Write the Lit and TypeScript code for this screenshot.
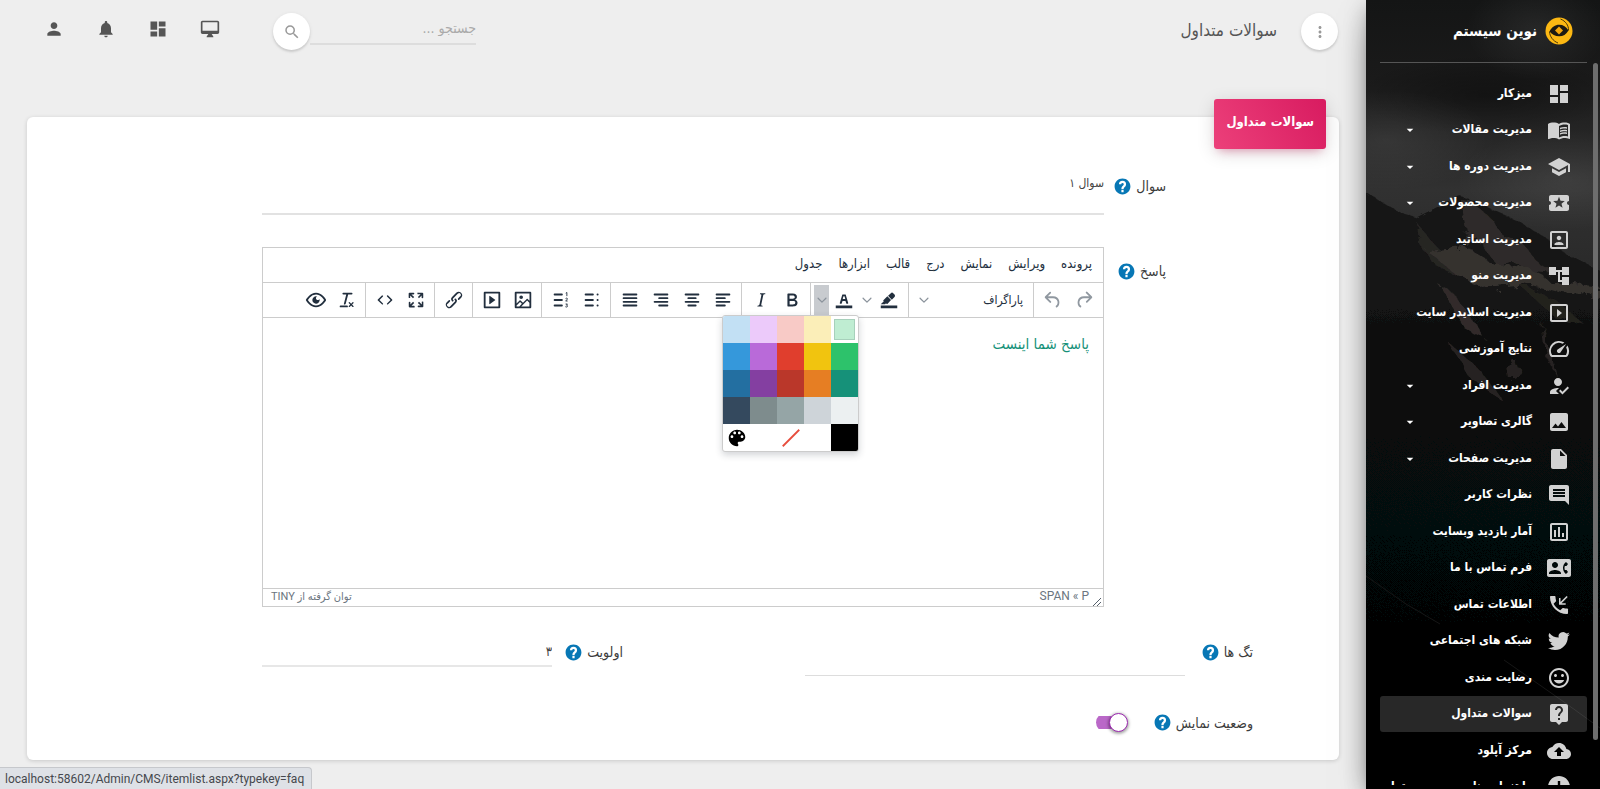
import { LitElement, html, css, svg, nothing } from "lit";
import { customElement, property, state } from "lit/decorators.js";
import { classMap } from "lit/directives/class-map.js";
import { styleMap } from "lit/directives/style-map.js";

const ICONS: Record<string, string> = {
  dashboard: "M3 13h8V3H3v10zm0 8h8v-6H3v6zm10 0h8V11h-8v10zm0-18v6h8V3h-8z",
  book: "M21 5c-1.11-.35-2.33-.5-3.5-.5-1.95 0-4.05.4-5.5 1.5-1.45-1.1-3.55-1.5-5.5-1.5S2.45 4.9 1 6v14.65c0 .25.25.5.5.5.1 0 .15-.05.25-.05C3.1 20.45 5.05 20 6.5 20c1.95 0 4.05.4 5.5 1.5 1.35-.85 3.8-1.5 5.5-1.5 1.65 0 3.35.3 4.75 1.05.1.05.15.05.25.05.25 0 .5-.25.5-.5V6c-.6-.45-1.25-.75-2-1zm0 13.5c-1.1-.35-2.3-.5-3.5-.5-1.7 0-4.15.65-5.5 1.5V8c1.35-.85 3.8-1.5 5.5-1.5 1.2 0 2.4.15 3.5.5v11.5zM17.5 10.5c.88 0 1.73.09 2.5.26V9.24c-.79-.15-1.64-.24-2.5-.24-1.7 0-3.24.29-4.5.83v1.66c1.13-.64 2.7-.99 4.5-.99zM13 12.49v1.66c1.13-.64 2.7-.99 4.5-.99.88 0 1.73.09 2.5.26V11.9c-.79-.15-1.64-.24-2.5-.24-1.7 0-3.24.3-4.5.83zM17.5 14.33c-1.7 0-3.24.29-4.5.83v1.66c1.13-.64 2.7-.99 4.5-.99.88 0 1.73.09 2.5.26v-1.52c-.79-.16-1.64-.24-2.5-.24z",
  school: "M5 13.18v4L12 21l7-3.82v-4L12 17l-7-3.82zM12 3L1 9l11 6 9-4.91V17h2V9L12 3z",
  ticket: "M20 12c0-1.1.9-2 2-2V6c0-1.1-.9-2-2-2H4c-1.1 0-1.99.9-1.99 2v4c1.1 0 1.99.9 1.99 2s-.89 2-2 2v4c0 1.1.9 2 2 2h16c1.1 0 2-.9 2-2v-4c-1.1 0-2-.9-2-2zm-4.42 4.8L12 14.5l-3.58 2.3 1.08-4.12-3.29-2.69 4.24-.25L12 5.8l1.54 3.95 4.24.25-3.29 2.69 1.09 4.11z",
  portrait: "M12 12.25c1.24 0 2.25-1.01 2.25-2.25S13.24 7.75 12 7.75 9.75 8.76 9.75 10s1.01 2.25 2.25 2.25zm4.5 4c0-1.5-3-2.25-4.5-2.25s-4.5.75-4.5 2.25V17h9v-.75zM19 3H5c-1.1 0-2 .9-2 2v14c0 1.1.9 2 2 2h14c1.1 0 2-.9 2-2V5c0-1.1-.9-2-2-2zm0 16H5V5h14v14z",
  tree: "M22 11V3h-7v3H9V3H2v8h7V8h2v10h4v3h7v-8h-7v3h-2V8h2v3z",
  slideshow: "M10 8v8l5-4-5-4zm9-5H5c-1.1 0-2 .9-2 2v14c0 1.1.9 2 2 2h14c1.1 0 2-.9 2-2V5c0-1.1-.9-2-2-2zm0 16H5V5h14v14z",
  speed: "M20.38 8.57l-1.23 1.85a8 8 0 01-.22 7.58H5.07A8 8 0 0115.58 6.85l1.85-1.23A10 10 0 003.35 19a2 2 0 001.72 1h13.85a2 2 0 001.74-1 10 10 0 00-.27-10.44zm-9.79 6.84a2 2 0 002.83 0l5.66-8.49-8.49 5.66a2 2 0 000 2.83z",
  people: "M9 17l3-2.94c-.39-.04-.68-.06-1-.06-2.67 0-8 1.34-8 4v2h9l-3-3zm2-5c2.21 0 4-1.79 4-4s-1.79-4-4-4-4 1.79-4 4 1.79 4 4 4M15.47 20.5L12 17l1.4-1.41 2.07 2.08 5.13-5.17 1.4 1.41z",
  photo: "M21 19V5c0-1.1-.9-2-2-2H5c-1.1 0-2 .9-2 2v14c0 1.1.9 2 2 2h14c1.1 0 2-.9 2-2zM8.5 13.5l2.5 3.01L14.5 12l4.5 6H5l3.5-4.5z",
  file: "M6 2c-1.1 0-1.99.9-1.99 2L4 20c0 1.1.89 2 1.99 2H18c1.1 0 2-.9 2-2V8l-6-6H6zm7 7V3.5L18.5 9H13z",
  comment: "M21.99 4c0-1.1-.89-2-1.99-2H4c-1.1 0-2 .9-2 2v12c0 1.1.9 2 2 2h14l4 4-.01-18zM18 14H6v-2h12v2zm0-3H6V9h12v2zm0-3H6V6h12v2z",
  chart: "M9 17H7v-7h2v7zm4 0h-2V7h2v10zm4 0h-2v-4h2v4zM19 3H5c-1.1 0-2 .9-2 2v14c0 1.1.9 2 2 2h14c1.1 0 2-.9 2-2V5c0-1.1-.9-2-2-2zm0 16H5V5h14v14z",
  contact: "M22 3H2C.9 3 0 3.9 0 5v14c0 1.1.9 2 2 2h20c1.1 0 1.99-.9 1.99-2L24 5c0-1.1-.9-2-2-2zM8 6c1.66 0 3 1.34 3 3s-1.34 3-3 3-3-1.34-3-3 1.34-3 3-3zm6 12H2v-1c0-2 4-3.1 6-3.1s6 1.1 6 3.1v1zm3.85-4h1.64L21 16l-1.99 1.99c-1.31-.98-2.28-2.38-2.73-3.99-.18-.64-.28-1.31-.28-2s.1-1.36.28-2c.45-1.62 1.42-3.01 2.73-3.99L21 8l-1.51 2h-1.64c-.22.63-.35 1.3-.35 2s.13 1.37.35 2z",
  phone: "M20 15.5c-1.25 0-2.45-.2-3.57-.57-.35-.11-.74-.03-1.02.24l-2.2 2.2c-2.83-1.44-5.15-3.75-6.59-6.58l2.2-2.21c.28-.27.36-.66.25-1.01C8.7 6.45 8.5 5.25 8.5 4c0-.55-.45-1-1-1H4c-.55 0-1 .45-1 1 0 9.39 7.61 17 17 17 .55 0 1-.45 1-1v-3.5c0-.55-.45-1-1-1zM19.6 3l-6.1 6.1V5H12v6.7h6.7v-1.5h-4.1L20.7 4.1z",
  twitter: "M22.9 5.2a9.2 9.2 0 01-2.6.7 4.5 4.5 0 002-2.5 9 9 0 01-2.9 1.1 4.5 4.5 0 00-7.7 4.1A12.8 12.8 0 012.4 3.9a4.5 4.5 0 001.4 6 4.5 4.5 0 01-2-.5v.1a4.5 4.5 0 003.6 4.4 4.6 4.6 0 01-2 .1 4.5 4.5 0 004.2 3.1A9 9 0 011 19a12.8 12.8 0 006.9 2c8.3 0 12.9-6.9 12.9-12.8v-.6a9.2 9.2 0 002.1-2.4z",
  mood: "M11.99 2C6.47 2 2 6.48 2 12s4.47 10 9.99 10C17.52 22 22 17.52 22 12S17.52 2 11.99 2zM12 20c-4.42 0-8-3.58-8-8s3.58-8 8-8 8 3.58 8 8-3.58 8-8 8zm3.5-9c.83 0 1.5-.67 1.5-1.5S16.33 8 15.5 8 14 8.67 14 9.5s.67 1.5 1.5 1.5zm-7 0c.83 0 1.5-.67 1.5-1.5S9.33 8 8.5 8 7 8.67 7 9.5 7.67 11 8.5 11zm3.5 6.5c2.33 0 4.31-1.46 5.11-3.5H6.89c.8 2.04 2.78 3.5 5.11 3.5z",
  faq: "M19 2H5c-1.11 0-2 .9-2 2v14c0 1.1.89 2 2 2h4l3 3 3-3h4c1.1 0 2-.9 2-2V4c0-1.1-.9-2-2-2zm-6 16h-2v-2h2v2zm2.07-7.75l-.9.92C13.45 11.9 13 12.5 13 14h-2v-.5c0-1.1.45-2.1 1.17-2.83l1.24-1.26c.37-.36.59-.86.59-1.41 0-1.1-.9-2-2-2s-2 .9-2 2H8c0-2.21 1.79-4 4-4s4 1.79 4 4c0 .88-.36 1.68-.93 2.25z",
  upload: "M19.35 10.04C18.67 6.59 15.64 4 12 4 9.11 4 6.6 5.64 5.35 8.04 2.34 8.36 0 10.91 0 14c0 3.31 2.69 6 6 6h13c2.76 0 5-2.24 5-5 0-2.64-2.05-4.78-4.65-4.96zM14 13v4h-4v-4H7l5-5 5 5h-3z",
  guide: "M12 1C5.900 1 1 5.900 1 12s4.900 11 11 11 11-4.900 11-11S18.100 1 12 1zm1.200 17h-2.400v-2.400h2.400V18zm0-4.400h-2.400V6h2.400v7.600z",
  help: "M12 2C6.48 2 2 6.48 2 12s4.48 10 10 10 10-4.48 10-10S17.52 2 12 2zm1.4 17.2h-2.800v-2.700h2.800v2.700zm2.400-7.500l-1 1c-.8.8-1.400 1.300-1.400 2.700h-2.800v-.7c0-1.100.5-2.100 1.200-2.900l1.300-1.300c.4-.4.5-.8.5-1.300a1.600 1.600 0 00-3.200 0H7.500a4.500 4.500 0 019 0c0 1-.3 1.900-.7 2.500z",
  person: "M12 12c2.21 0 4-1.79 4-4s-1.79-4-4-4-4 1.79-4 4 1.79 4 4 4zm0 2c-2.67 0-8 1.34-8 4v2h16v-2c0-2.66-5.33-4-8-4z",
  bell: "M12 22c1.1 0 2-.9 2-2h-4c0 1.1.89 2 2 2zm6-6v-5c0-3.07-1.64-5.64-4.5-6.32V4c0-.83-.67-1.5-1.5-1.5s-1.5.67-1.5 1.5v.68C7.63 5.36 6 7.92 6 11v5l-2 2v1h16v-1l-2-2z",
  desktop: "M21 2H3c-1.1 0-2 .9-2 2v12c0 1.1.9 2 2 2h7l-2 3v1h8v-1l-2-3h7c1.1 0 2-.9 2-2V4c0-1.1-.9-2-2-2zm0 12H3V4h18v10z",
  search: "M15.5 14h-.79l-.28-.27A6.471 6.471 0 0016 9.5 6.5 6.5 0 109.5 16c1.61 0 3.09-.59 4.23-1.57l.27.28v.79l5 4.99L20.49 19l-4.99-5zm-6 0C7.01 14 5 11.99 5 9.5S7.01 5 9.5 5 14 7.01 14 9.5 11.99 14 9.5 14z",
  more: "M12 8c1.1 0 2-.9 2-2s-.9-2-2-2-2 .9-2 2 .9 2 2 2zm0 2c-1.1 0-2 .9-2 2s.9 2 2 2 2-.9 2-2-.9-2-2-2zm0 6c-1.1 0-2 .9-2 2s.9 2 2 2 2-.9 2-2-.9-2-2-2z",
  caret: "M4 9l8 8 8-8z",
  forward: "M17.6 10H12c-2.8 0-4.4 1.4-4.9 3.5-.4 2 .3 4 1.4 4.6a1 1 0 11-1 1.8c-2-1.2-2.9-4.1-2.3-6.8.6-3 3-5.1 6.8-5.1h5.6l-3.3-3.3a1 1 0 111.4-1.4l5 5a1 1 0 010 1.4l-5 5a1 1 0 01-1.4-1.4l3.3-3.3z",
  back: "M6.4 8H12c3.7 0 6.2 2 6.8 5.1.6 2.7-.4 5.6-2.3 6.8a1 1 0 01-1-1.8c1.1-.6 1.8-2.7 1.4-4.6-.5-2.1-2.1-3.5-4.9-3.5H6.4l3.3 3.3a1 1 0 11-1.4 1.4l-5-5a1 1 0 010-1.4l5-5a1 1 0 011.4 1.4L6.4 8z",
  chevron: "M19 7.6c.5-.5 1.3-.5 1.7 0 .5.5.5 1.2 0 1.7l-7.9 7.6c-.5.5-1.2.5-1.7 0L3.3 9.3a1.2 1.2 0 010-1.7c.5-.5 1.2-.5 1.7 0l7 6.8z",
  highlight: "M3 18h18v3H3zM7.7 16.7H3l3.3-3.3-.7-.8L10.2 8l4 4.1-4 4.2c-.2.2-.6.2-.8 0l-.6-.7-1.1 1.1zm5-7.5L11 7.4l3-2.9a2 2 0 012.6 0L18 6c.7.7.7 2 0 2.7l-2.9 2.9z",
  forecolor: "M3 18h18v3H3zM8.7 16h-.8a.5.5 0 01-.5-.6l2.7-9c.1-.3.3-.4.5-.4h2.8c.2 0 .4.1.5.4l2.7 9a.5.5 0 01-.5.6h-1.3a.5.5 0 01-.4-.4l-.7-2.2c0-.3-.3-.4-.5-.4h-2.4c-.2 0-.4.1-.5.4l-.7 2.2c0 .3-.2.4-.4.4zm2.6-7.6l-.6 2a.5.5 0 00.5.6h1.6a.5.5 0 00.5-.6l-.6-2c0-.3-.3-.4-.5-.4h-.4c-.2 0-.4.1-.5.4z",
  bold: "M7.8 19c-.3 0-.5 0-.6-.2l-.2-.5V5.7c0-.2 0-.4.2-.5l.6-.2h5c1.5 0 2.7.3 3.5 1 .7.6 1.1 1.4 1.1 2.5a3 3 0 01-.6 1.9c-.4.6-1 1-1.6 1.2.4.1.9.3 1.3.6s.8.7 1 1.2c.4.4.5 1 .5 1.6 0 1.3-.4 2.3-1.3 3-.8.7-2.1 1-3.8 1H7.8zm5-8.3c.6 0 1.2-.1 1.6-.5.4-.3.6-.7.6-1.3 0-1.1-.8-1.7-2.3-1.7H9.3v3.5h3.4zm.5 6c.7 0 1.3-.1 1.7-.4.4-.4.6-.9.6-1.5s-.2-1-.7-1.4c-.4-.3-1-.4-2-.4H9.4v3.8h4z",
  italic: "M16.7 4.7l-.1.9h-.3c-.6 0-1 0-1.4.3-.3.3-.4.6-.5 1.1l-2.1 9.8v.6c0 .5.4.8 1.4.8h.2l-.2.8H8l.2-.8h.2c1.1 0 1.8-.5 2-1.5l2-9.8.1-.5c0-.6-.4-.8-1.4-.8h-.3l.2-.9h5.8z",
  media: "M4 3h16c.6 0 1 .4 1 1v16c0 .6-.4 1-1 1H4a1 1 0 01-1-1V4c0-.6.4-1 1-1zm1 2v14h14V5H5zm4.800 2.600l5.600 4a.5.5 0 010 .8l-5.600 4A.5.5 0 019 16V8a.5.5 0 01.8-.4z",
  image: "M5 15.7l3.3-3.2c.3-.3.7-.3 1 0L12 15l4.1-4c.3-.4.8-.4 1 0l2 1.9V5H5v10.7zM5 18V19h3l2.8-2.9-2-2L5 17.9zm14-3l-2.5-2.4-6.4 6.5H19v-4zM4 3h16c.6 0 1 .4 1 1v16c0 .6-.4 1-1 1H4a1 1 0 01-1-1V4c0-.6.4-1 1-1zm6 8a2 2 0 100-4 2 2 0 000 4z",
  link: "M6.2 12.3a1 1 0 011.4 1.4l-2.1 2a2 2 0 102.7 2.8l4.8-4.8a1 1 0 000-1.4 1 1 0 111.4-1.3 2.9 2.9 0 010 4L9.6 20a3.9 3.9 0 01-5.5-5.5l2-2zm11.6-.6a1 1 0 01-1.4-1.4l2-2a2 2 0 10-2.6-2.8L11 10.3a1 1 0 000 1.4A1 1 0 119.6 13a2.9 2.9 0 010-4L14.4 4a3.9 3.9 0 015.5 5.5l-2 2z",
  code: "M9.8 15.7c.3.3.3.8 0 1-.3.4-.9.4-1.2 0l-4.4-4.1a.8.8 0 010-1.2l4.4-4.2c.3-.3.9-.3 1.2 0 .3.3.3.8 0 1.1L6 12l3.8 3.7zM14.2 15.7c-.3.3-.3.8 0 1 .4.4.9.4 1.2 0l4.4-4.1c.3-.3.3-.9 0-1.2l-4.4-4.2a.8.8 0 00-1.2 0c-.3.3-.3.8 0 1.1L18 12l-3.8 3.7z",
  fullscreen: "M15.3 10l-1.2-1.3 2.9-3h-2.3a.9.9 0 110-1.7H19c.5 0 .9.4.9.9v4.4a.9.9 0 11-1.8 0V7l-2.9 3zm0 4l3 3v-2.3a.9.9 0 111.7 0V19c0 .5-.4.9-.9.9h-4.4a.9.9 0 110-1.8H17l-3-2.9 1.3-1.2zM10 15.4l-2.9 3h2.3a.9.9 0 110 1.7H5a.9.9 0 01-.9-.9v-4.4a.9.9 0 111.8 0V17l2.9-3 1.2 1.3zM8.7 10L5.7 7v2.3a.9.9 0 01-1.7 0V5c0-.5.4-.9.9-.9h4.4a.9.9 0 010 1.8H7l3 2.9-1.3 1.2z",
  clear: "M13.2 6a1 1 0 010 .2l-2.6 10a1 1 0 01-1 .8h-.2a.8.8 0 01-.8-1l2.6-10H8a1 1 0 110-2h9a1 1 0 010 2h-3.8zM5 18h7a1 1 0 010 2H5a1 1 0 010-2zm13 1.5L16.5 18 15 19.5a.7.7 0 01-1-1l1.5-1.5-1.5-1.5a.7.7 0 011-1l1.5 1.5 1.5-1.5a.7.7 0 011 1L17.5 17l1.5 1.5a.7.7 0 01-1 1z",
  preview: "M3.5 12.5c.5.8 1.1 1.6 1.8 2.3 2 2 4.2 3.2 6.7 3.2s4.7-1.2 6.7-3.2a16.2 16.2 0 002.1-2.8 15.7 15.7 0 00-2.1-2.8c-2-2-4.2-3.2-6.7-3.2a9.3 9.3 0 00-6.7 3.2A16.2 16.2 0 003.2 12c0 .2.2.3.3.5zm-2.4-1l.7-1.2L4 7.8C6.2 5.4 8.9 4 12 4c3 0 5.8 1.4 8.1 3.8a18.2 18.2 0 012.8 3.7v1l-.7 1.2-2.1 2.5c-2.3 2.4-5 3.8-8.1 3.8-3 0-5.8-1.4-8.1-3.8a18.2 18.2 0 01-2.8-3.7 1 1 0 010-1zm12-3.3a2 2 0 102.7 2.6 4 4 0 11-2.6-2.6z",
  palette: "M12 3c-4.97 0-9 4.03-9 9s4.03 9 9 9c.83 0 1.5-.67 1.5-1.5 0-.39-.15-.74-.39-1.01-.23-.26-.38-.61-.38-.99 0-.83.67-1.5 1.5-1.5H16c2.76 0 5-2.24 5-5 0-4.42-4.03-8-9-8zm-5.5 9c-.83 0-1.5-.67-1.5-1.5S5.67 9 6.5 9 8 9.67 8 10.5 7.33 12 6.5 12zm3-4C8.67 8 8 7.33 8 6.5S8.67 5 9.5 5s1.5.67 1.5 1.5S10.33 8 9.5 8zm5 0c-.83 0-1.5-.67-1.5-1.5S13.67 5 14.5 5s1.5.67 1.5 1.5S15.33 8 14.5 8zm3 4c-.83 0-1.5-.67-1.5-1.5S16.67 9 17.5 9s1.5.67 1.5 1.5-.67 1.5-1.5 1.5z",
};

/* Icons built from straight strokes: alignment and lists. */
const STROKES: Record<string, { d: string; thin?: string }> = {
  alignLeft: { d: "M5 6h14M5 10h9M5 14h14M5 18h9" },
  alignCenter: { d: "M5 6h14M8 10h8M5 14h14M8 18h8" },
  alignRight: { d: "M5 6h14M10 10h9M5 14h14M10 18h9" },
  alignJustify: { d: "M5 6h14M5 10h14M5 14h14M5 18h14" },
  bullets: { d: "M5 6h8M5 12h8M5 18h8M18 6h.2M18 12h.2M18 18h.2" },
  numbers: {
    d: "M5 6h8M5 12h8M5 18h8",
    thin: "M17.2 4.6l1.2-.8v4M17 10.6c.4-.9 2.2-.8 2 .3-.1.6-1.2 1.3-2 2.2h2.2M17 16.4h2l-1 1.2c1.600.1 1.400 2.200-.2 2.100-.4 0-.8-.2-1-.4",
  },
};

@customElement("ui-icon")
export class UiIcon extends LitElement {
  static styles = css`
    :host { display: inline-flex; flex: none; width: 22px; height: 22px; }
    svg { display: block; width: 100%; height: 100%; fill: currentColor; }
    .stroke { fill: none; stroke: currentColor; stroke-width: 2; stroke-linecap: round; }
    .thin { fill: none; stroke: currentColor; stroke-width: 1; }
  `;
  @property() name = "";

  render() {
    const s = STROKES[this.name];
    return html`<svg viewBox="0 0 24 24" aria-hidden="true">
      ${s
        ? svg`<path class="stroke" d=${s.d}></path>${s.thin ? svg`<path class="thin" d=${s.thin}></path>` : nothing}`
        : svg`<path fill-rule="evenodd" d=${ICONS[this.name] ?? ""}></path>`}
    </svg>`;
  }
}

interface MenuEntry { icon: string; label: string; sub?: boolean; active?: boolean; }

const MENU: MenuEntry[] = [
  { icon: "dashboard", label: "میزکار" },
  { icon: "book", label: "مدیریت مقالات", sub: true },
  { icon: "school", label: "مدیریت دوره ها", sub: true },
  { icon: "ticket", label: "مدیریت محصولات", sub: true },
  { icon: "portrait", label: "مدیریت اساتید" },
  { icon: "tree", label: "مدیریت منو" },
  { icon: "slideshow", label: "مدیریت اسلایدر سایت" },
  { icon: "speed", label: "نتایج آموزشی" },
  { icon: "people", label: "مدیریت افراد", sub: true },
  { icon: "photo", label: "گالری تصاویر", sub: true },
  { icon: "file", label: "مدیریت صفحات", sub: true },
  { icon: "comment", label: "نظرات کاربر" },
  { icon: "chart", label: "آمار بازدید وبسایت" },
  { icon: "contact", label: "فرم تماس با ما" },
  { icon: "phone", label: "اطلاعات تماس" },
  { icon: "twitter", label: "شبکه های اجتماعی" },
  { icon: "mood", label: "رضایت مندی" },
  { icon: "faq", label: "سوالات متداول", active: true },
  { icon: "upload", label: "مرکز آپلود" },
  { icon: "guide", label: "راهنمای پنل مدیریت محتوا" },
];

@customElement("side-bar")
export class SideBar extends LitElement {
  static styles = css`
    :host {
      position: relative; z-index: 2; display: flex; flex-direction: column; flex: none;
      box-sizing: border-box; width: 234px; height: 100vh; padding-bottom: 4px;
      background: #050606; color: #fff;
      box-shadow: 0 14px 34px -11px rgba(0,0,0,.56), 0 4px 22px 0 rgba(0,0,0,.2), 0 7px 9px -4px rgba(0,0,0,.2);
    }
    .scene { position: absolute; inset: 0; width: 100%; height: 100%; }
    .brand {
      position: relative; display: flex; align-items: center; gap: 8px; height: 62px;
      margin: 0 13px 0 14px; padding-right: 14px; border-bottom: 1px solid #555;
      font-size: 15px; font-weight: 700; color: #fff; text-decoration: none; box-sizing: content-box;
    }
    .logo { width: 28px; height: 28px; }
    nav { position: relative; flex: 1; min-height: 0; overflow: hidden; padding: 13px 13px 0 14px; }
    ul { list-style: none; margin: 0; padding: 0; }
    li:nth-child(even) { margin-bottom: 1px; }
    a.entry {
      display: flex; align-items: center; height: 36px; padding: 0 16px 0 25px; border-radius: 3px;
      font-size: 12px; font-weight: 700; color: #fff; text-decoration: none; white-space: nowrap;
    }
    a.entry.active { background: rgba(200,200,200,.2); }
    .entry ui-icon { width: 24px; height: 24px; margin-left: 15px; color: #d2d2d2; }
    .entry span { flex: 1; padding-bottom: 2px; }
    .entry ui-icon.caret { width: 10px; height: 10px; margin: 0; color: #fff; }
    .thumb {
      position: absolute; top: 0; right: 2px; width: 5px; height: 677px; border-radius: 3px; background: #6e6e6e;
    }
  `;

  render() {
    return html`
      <svg class="scene" viewBox="0 0 234 789" preserveAspectRatio="xMidYMin slice" aria-hidden="true">
        <defs>
          <linearGradient id="sky" x1="0" y1="0" x2="0" y2="1">
            <stop offset="0" stop-color="#141515"></stop>
            <stop offset=".1" stop-color="#1a1a1a"></stop>
            <stop offset=".24" stop-color="#313131"></stop>
            <stop offset=".34" stop-color="#2a2a2a"></stop>
            <stop offset="1" stop-color="#050606"></stop>
          </linearGradient>
          <linearGradient id="rock" x1="0" y1="0" x2="0" y2="1">
            <stop offset="0" stop-color="#1a1a1a"></stop>
            <stop offset=".2" stop-color="#121212"></stop>
            <stop offset=".4" stop-color="#070808"></stop>
            <stop offset="1" stop-color="#030404"></stop>
          </linearGradient>
          <radialGradient id="haze">
            <stop offset="0" stop-color="#fff" stop-opacity=".07"></stop>
            <stop offset="1" stop-color="#fff" stop-opacity="0"></stop>
          </radialGradient>
          <radialGradient id="dusk">
            <stop offset="0" stop-color="#000" stop-opacity=".35"></stop>
            <stop offset="1" stop-color="#000" stop-opacity="0"></stop>
          </radialGradient>
          <filter id="ragged" filterUnits="userSpaceOnUse" x="-20" y="170" width="274" height="260">
            <feTurbulence type="fractalNoise" baseFrequency=".09" numOctaves="4" seed="7" result="n"></feTurbulence>
            <feDisplacementMap in="SourceGraphic" in2="n" scale="16"></feDisplacementMap>
          </filter>
          <filter id="ridge" filterUnits="userSpaceOnUse" x="-20" y="170" width="274" height="640">
            <feTurbulence type="fractalNoise" baseFrequency=".12" numOctaves="3" seed="3" result="n"></feTurbulence>
            <feDisplacementMap in="SourceGraphic" in2="n" scale="6"></feDisplacementMap>
          </filter>
        </defs>
        <rect width="234" height="789" fill="url(#sky)"></rect>
        <ellipse cx="120" cy="95" rx="130" ry="40" fill="url(#dusk)"></ellipse>
        <ellipse cx="170" cy="30" rx="70" ry="50" fill="url(#haze)"></ellipse>
        <ellipse cx="20" cy="140" rx="110" ry="50" fill="url(#haze)"></ellipse>
        <ellipse cx="200" cy="180" rx="110" ry="50" fill="url(#haze)"></ellipse>
        <path d="M-20 184l20 8 16 10 14 8 22 8 20-10 22-12 12 4 26 12 22 10 26 16 20 16 60 30v530H-20z" fill="url(#rock)" filter="url(#ridge)"></path>
        <g filter="url(#ragged)">
          <path d="M94 200l10 1 22 18 12 18 20 8 14 18 20 12-24-2-24-14-14 6-18-26-10 8z" fill="#2e2b29"></path>
          <path d="M50 222l20 24 14 10 6 18-22-10-16-22z" fill="#272524"></path>
          <path d="M60 250l38-4 28 16 30 4 28 14 50 6v12l-36-4-40-10-36 4-30-12z" fill="#35312f"></path>
          <path d="M74 286l14 8 18 24 14 22-22-12z" fill="#302c2a"></path>
          <path d="M150 282l40 18 30 26-30-8z" fill="#23211f"></path>
          <path d="M84 344l30 26 24 32-34-24z" fill="#282422"></path>
          <path d="M140 366l10-6 4 12-12 6zM176 322l8 24 6 30-10-20z" fill="#262321"></path>
        </g>
        <path d="M0 576l40 28 34 20M138 660l60 42 36 26" fill="none" stroke="#161616" stroke-width="1"></path>
      </svg>
      <a class="brand" href="#">
        <svg class="logo" viewBox="0 0 28 28" aria-hidden="true">
          <circle cx="14" cy="14" r="13.500" fill="#fcb813"></circle>
          <path d="M4.500 14.500c2.500-4.500 5.500-6.700 9.700-6.700 4 0 7 2 9.300 5.600-2.300 4-5.300 5.900-9.300 5.900-4 0-7.200-1.600-9.700-4.800z" fill="#1d1a12"></path>
          <path d="M4.500 14.500c.2 5 3.500 9.500 8.500 11.500M23.500 13.400c.3-5-3-9.400-8-11.400" fill="none" stroke="#4a3506" stroke-width="1"></path>
          <path d="M14 9.400l4 4.100-4 4.100-4-4.100z" fill="#f5a60a"></path>
        </svg>
        <span>نوین سیستم</span>
      </a>
      <nav>
        <ul>
          ${MENU.map((m) => html`<li>
            <a href="#" class=${classMap({ entry: true, active: !!m.active })}>
              <ui-icon name=${m.icon}></ui-icon><span>${m.label}</span>
              ${m.sub ? html`<ui-icon class="caret" name="caret"></ui-icon>` : nothing}
            </a>
          </li>`)}
        </ul>
        <div class="thumb"></div>
      </nav>
    `;
  }
}

const SWATCHES = [
  "#bfedd2", "#fbeeb8", "#f8cac6", "#eccafa", "#c2e0f4",
  "#2dc26b", "#f1c40f", "#e03e2d", "#b96ad9", "#3598db",
  "#169179", "#e67e23", "#ba372a", "#843fa1", "#236fa1",
  "#ecf0f1", "#ced4d9", "#95a5a6", "#7e8c8d", "#34495e",
  "#000000", "#ffffff",
];

@customElement("rich-editor")
export class RichEditor extends LitElement {
  static styles = css`
    :host { display: flex; flex-direction: column; height: 358px; border: 1px solid #ccc; color: #222f3e; background: #fff; }
    button { font: inherit; color: inherit; background: none; border: 0; padding: 0; margin: 0; }
    .menubar { display: flex; flex: none; height: 34px; padding: 0 3px; border-bottom: 1px solid #ccc; box-sizing: content-box; }
    .menubar button { padding: 0 8px 4px; font-size: 13px; }
    .toolbar { display: flex; flex: none; height: 34px; border-bottom: 1px solid #ccc; }
    .group { display: flex; align-items: center; padding: 0 4px 0 3px; border-left: 1px solid #ccc; }
    .group.tight { padding: 0 3px; }
    .group:last-child { border-left: 0; }
    .tool { display: flex; align-items: center; justify-content: center; width: 31px; height: 30px; }
    .tool:disabled { color: #9098a0; }
    .split { position: relative; display: flex; }
    .split .tool { width: 30px; }
    .drop { display: flex; align-items: center; justify-content: center; width: 15px; height: 30px; color: #8a929b; }
    .drop.open { background: #c8cbcf; }
    ui-icon.small { width: 12px; height: 12px; }
    .format { display: flex; align-items: center; justify-content: space-between; width: 117px; height: 30px; padding: 0 6px; font-size: 12px; }
    .format ui-icon { color: #8a929b; }
    .palette {
      position: absolute; z-index: 3; top: 100%; right: 0; display: grid; grid-template-columns: repeat(5, 27px); grid-auto-rows: 27px;
      border: 1px solid #ccc; border-radius: 3px; background: #fff; overflow: hidden;
      box-shadow: 0 3px 7px rgba(34,47,62,.2);
    }
    .swatch.picked { margin: 3px; border: 1px solid rgba(34,47,62,.15); }
    .special { display: flex; align-items: center; justify-content: center; color: #000; }
    .special.picker { grid-column: 5; }
    .none { width: 22px; height: 22px; fill: none; stroke: #e74c3c; stroke-width: 2; }
    .content { flex: 1; padding: 14px; font-size: 15px; line-height: 24px; color: #169179; outline: 0; }
    .content p { margin: 0; }
    .status {
      position: relative; display: flex; justify-content: space-between; flex: none; height: 17px; padding: 0 14px 0 8px; border-top: 1px solid #ccc;
      font-family: Roboto, "DejaVu Sans Condensed", "DejaVu Sans", sans-serif; font-size: 12px; line-height: 15px; color: #6b7580;
    }
    .status a { color: inherit; text-decoration: none; font-size: 11px; }
    .grip { position: absolute; right: 1px; bottom: 0; width: 9px; height: 9px; stroke: #555f6b; stroke-width: 1; }
  `;
  @state() private picked = "#bfedd2";

  private tool(name: string, label: string, disabled = false) {
    return html`<button class="tool" type="button" title=${label} ?disabled=${disabled}><ui-icon name=${name}></ui-icon></button>`;
  }

  render() {
    return html`
      <div class="menubar" role="menubar">
        ${["پرونده", "ویرایش", "نمایش", "درج", "قالب", "ابزارها", "جدول"].map((m) => html`<button type="button" role="menuitem">${m}</button>`)}
      </div>
      <div class="toolbar" role="toolbar">
        <div class="group">${this.tool("forward", "واگرد", true)}${this.tool("back", "ازنو", true)}</div>
        <div class="group">
          <button class="format" type="button"><span>پاراگراف</span><ui-icon class="small" name="chevron"></ui-icon></button>
        </div>
        <div class="group">
          <div class="split">
            ${this.tool("highlight", "رنگ پس زمینه")}
            <button class="drop" type="button" title="رنگ ها"><ui-icon class="small" name="chevron"></ui-icon></button>
          </div>
          <div class="split">
            ${this.tool("forecolor", "رنگ متن")}
            <button class="drop open" type="button" title="رنگ ها"><ui-icon class="small" name="chevron"></ui-icon></button>
            <div class="palette">
              ${SWATCHES.map((c) => html`<button type="button" title=${c}
                class=${classMap({ swatch: true, picked: c === this.picked })}
                style=${styleMap({ backgroundColor: c })} @click=${() => (this.picked = c)}></button>`)}
              <button class="special" type="button" title="بدون رنگ"><svg class="none" viewBox="0 0 24 24"><path d="M21 3L3 21"></path></svg></button>
              <button class="special picker" type="button" title="رنگ دلخواه"><ui-icon name="palette"></ui-icon></button>
            </div>
          </div>
        </div>
        <div class="group tight">${this.tool("bold", "درشت")}${this.tool("italic", "کج")}</div>
        <div class="group tight">
          ${this.tool("alignLeft", "چپ")}${this.tool("alignCenter", "وسط")}${this.tool("alignRight", "راست")}${this.tool("alignJustify", "هم تراز")}
        </div>
        <div class="group tight">${this.tool("bullets", "فهرست")}${this.tool("numbers", "فهرست شماره دار")}</div>
        <div class="group tight">${this.tool("image", "تصویر")}${this.tool("media", "رسانه")}</div>
        <div class="group tight">${this.tool("link", "پیوند")}</div>
        <div class="group tight">${this.tool("fullscreen", "تمام صفحه")}${this.tool("code", "کد منبع")}</div>
        <div class="group tight">${this.tool("clear", "پاک کردن قالب")}${this.tool("preview", "پیش نمایش")}</div>
      </div>
      <div class="content" contenteditable="true" role="textbox" aria-label="پاسخ"><p>پاسخ شما اینست</p></div>
      <div class="status">
        <span dir="ltr">SPAN « P</span>
        <a href="#">توان گرفته از TINY</a>
        <svg class="grip" viewBox="0 0 9 9" aria-hidden="true"><path d="M0 9l8-8M4 9l4-4"></path></svg>
      </div>
    `;
  }
}

@customElement("app-root")
export class AppRoot extends LitElement {
  static styles = css`
    :host {
      display: flex; direction: rtl; min-height: 100vh; background: #eee; color: #3c4858;
      font-family: "DejaVu Sans Condensed", "DejaVu Sans", sans-serif; font-size: 12px;
    }
    main { flex: 1; min-width: 0; }
    header { display: flex; align-items: center; height: 63px; padding: 0 28px; color: #555; }
    .round {
      display: flex; align-items: center; justify-content: center; width: 37px; height: 37px; padding: 0; border: 0; border-radius: 50%;
      background: #fff; color: #999; box-shadow: 0 2px 2px rgba(0,0,0,.1), 0 1px 4px rgba(0,0,0,.08);
    }
    .round ui-icon { width: 18px; height: 18px; }
    h1 { margin: 0; padding: 0 24px 4px 0; flex: 1; font-size: 17px; font-weight: 400; }
    .search { display: flex; align-items: center; margin-left: 37px; }
    .search input {
      box-sizing: border-box; width: 166px; height: 27px; padding: 0 0 6px; border: 0; border-bottom: 2px solid #ddd; background: none;
      font: inherit; font-size: 14px; color: #555;
    }
    .search input::placeholder { color: #aaa; opacity: 1; }
    .icons { display: flex; padding-bottom: 5px; }
    .icons button { display: flex; justify-content: center; width: 52px; padding: 0; border: 0; background: none; color: #555; }
    .icons ui-icon { width: 20px; height: 20px; }

    .card { margin: 54px 27px 28px; padding-bottom: 28px; border-radius: 6px; background: #fff; box-shadow: 0 1px 4px rgba(0,0,0,.16); }
    .ribbon {
      position: relative; top: -18px; display: flex; width: fit-content; box-sizing: border-box; height: 50px; margin-right: 13px; padding: 0 12px;
      justify-content: center; border-radius: 3px; color: #fff; background: linear-gradient(60deg, #ec407a, #d81b60);
      box-shadow: 0 4px 18px rgba(0,0,0,.14), 0 6px 9px -5px rgba(233,30,99,.4);
    }
    h2 { margin: 0; font-size: 13px; font-weight: 700; line-height: 46px; }
    label { display: flex; align-items: center; gap: 4px; font-size: 14px; color: #3c3c3c; white-space: nowrap; }
    label ui-icon { width: 19px; height: 19px; color: #0777b5; }
    .row { display: grid; grid-template-columns: 62px 1fr; padding: 0 173px 0 235px; align-items: start; }
    .pair { display: grid; grid-template-columns: 68px 380fr 182px 71px 290fr; padding: 0 86px 0 235px; margin-top: 32px; align-items: start; }
    .pair .second { grid-column: 4; }
    input.text {
      box-sizing: border-box; width: 100%; height: 48px; padding: 0 0 14px; border: 0; border-bottom: 2px solid #e2e2e2; background: none; border-radius: 0;
      font: inherit; font-size: 12px; color: #444; outline: 0;
    }
    input.low { height: 28px; padding: 0 0 2px; border-bottom-color: #e7e7e7; font-size: 13px; }
    input.tags { height: 37px; border-bottom: 1px solid #ddd; }
    label.first { height: 38px; }
    label.answer { height: 48px; }
    .editor { margin-top: 32px; }
    .pair label { height: 26px; }
    .switch { display: flex; align-items: center; gap: 25px; margin-top: 37px; padding-right: 86px; }
    .toggle {
      appearance: none; position: relative; width: 32px; height: 19px; margin: 0;
      background: linear-gradient(#ba68c8, #ba68c8) 0 50% / 26px 13px no-repeat; border-radius: 10px;
    }
    .toggle::after {
      content: ""; position: absolute; top: 0; right: 0; box-sizing: border-box; width: 19px; height: 19px; border: 1px solid #9c27b0; border-radius: 50%;
      background: #fff; box-shadow: 0 1px 3px 1px rgba(0,0,0,.35);
    }
    .url {
      position: fixed; left: 0; bottom: 0; z-index: 4; box-sizing: border-box; height: 22px; padding: 0 7px 0 5px; direction: ltr;
      border: 1px solid #c6c8cc; border-width: 1px 1px 0 0; border-radius: 0 4px 0 0; background: #dee1e6;
      font: 12px/22px Roboto, sans-serif; color: #45484d;
    }
  `;

  private label(text: string, target: string, cls = "") {
    return html`<label class=${cls} for=${target}>${text}<ui-icon name="help"></ui-icon></label>`;
  }

  render() {
    return html`
      <side-bar></side-bar>
      <main>
        <header>
          <button class="round" type="button" aria-label="گزینه ها"><ui-icon name="more"></ui-icon></button>
          <h1>سوالات متداول</h1>
          <div class="search">
            <input type="search" placeholder="جستجو ..." aria-label="جستجو" />
            <button class="round" type="button" aria-label="جستجو"><ui-icon name="search"></ui-icon></button>
          </div>
          <div class="icons">
            ${["desktop", "dashboard", "bell", "person"].map((n) => html`<button type="button" aria-label=${n}><ui-icon name=${n}></ui-icon></button>`)}
          </div>
        </header>
        <section class="card">
          <div class="ribbon"><h2>سوالات متداول</h2></div>
          <div class="row">
            ${this.label("سوال", "question", "first")}
            <input class="text" id="question" type="text" value="سوال ۱" />
          </div>
          <div class="row editor">
            ${this.label("پاسخ", "answer", "answer")}
            <rich-editor id="answer"></rich-editor>
          </div>
          <div class="pair">
            ${this.label("تگ ها", "tags")}
            <input class="text tags" id="tags" type="text" />
            ${this.label("اولویت", "priority", "second")}
            <input class="text low" id="priority" type="text" value="۳" />
          </div>
          <div class="switch">
            ${this.label("وضعیت نمایش", "visible")}
            <input class="toggle" id="visible" type="checkbox" role="switch" checked />
          </div>
        </section>
      </main>
      <div class="url">localhost:58602/Admin/CMS/itemlist.aspx?typekey=faq</div>
    `;
  }
}
